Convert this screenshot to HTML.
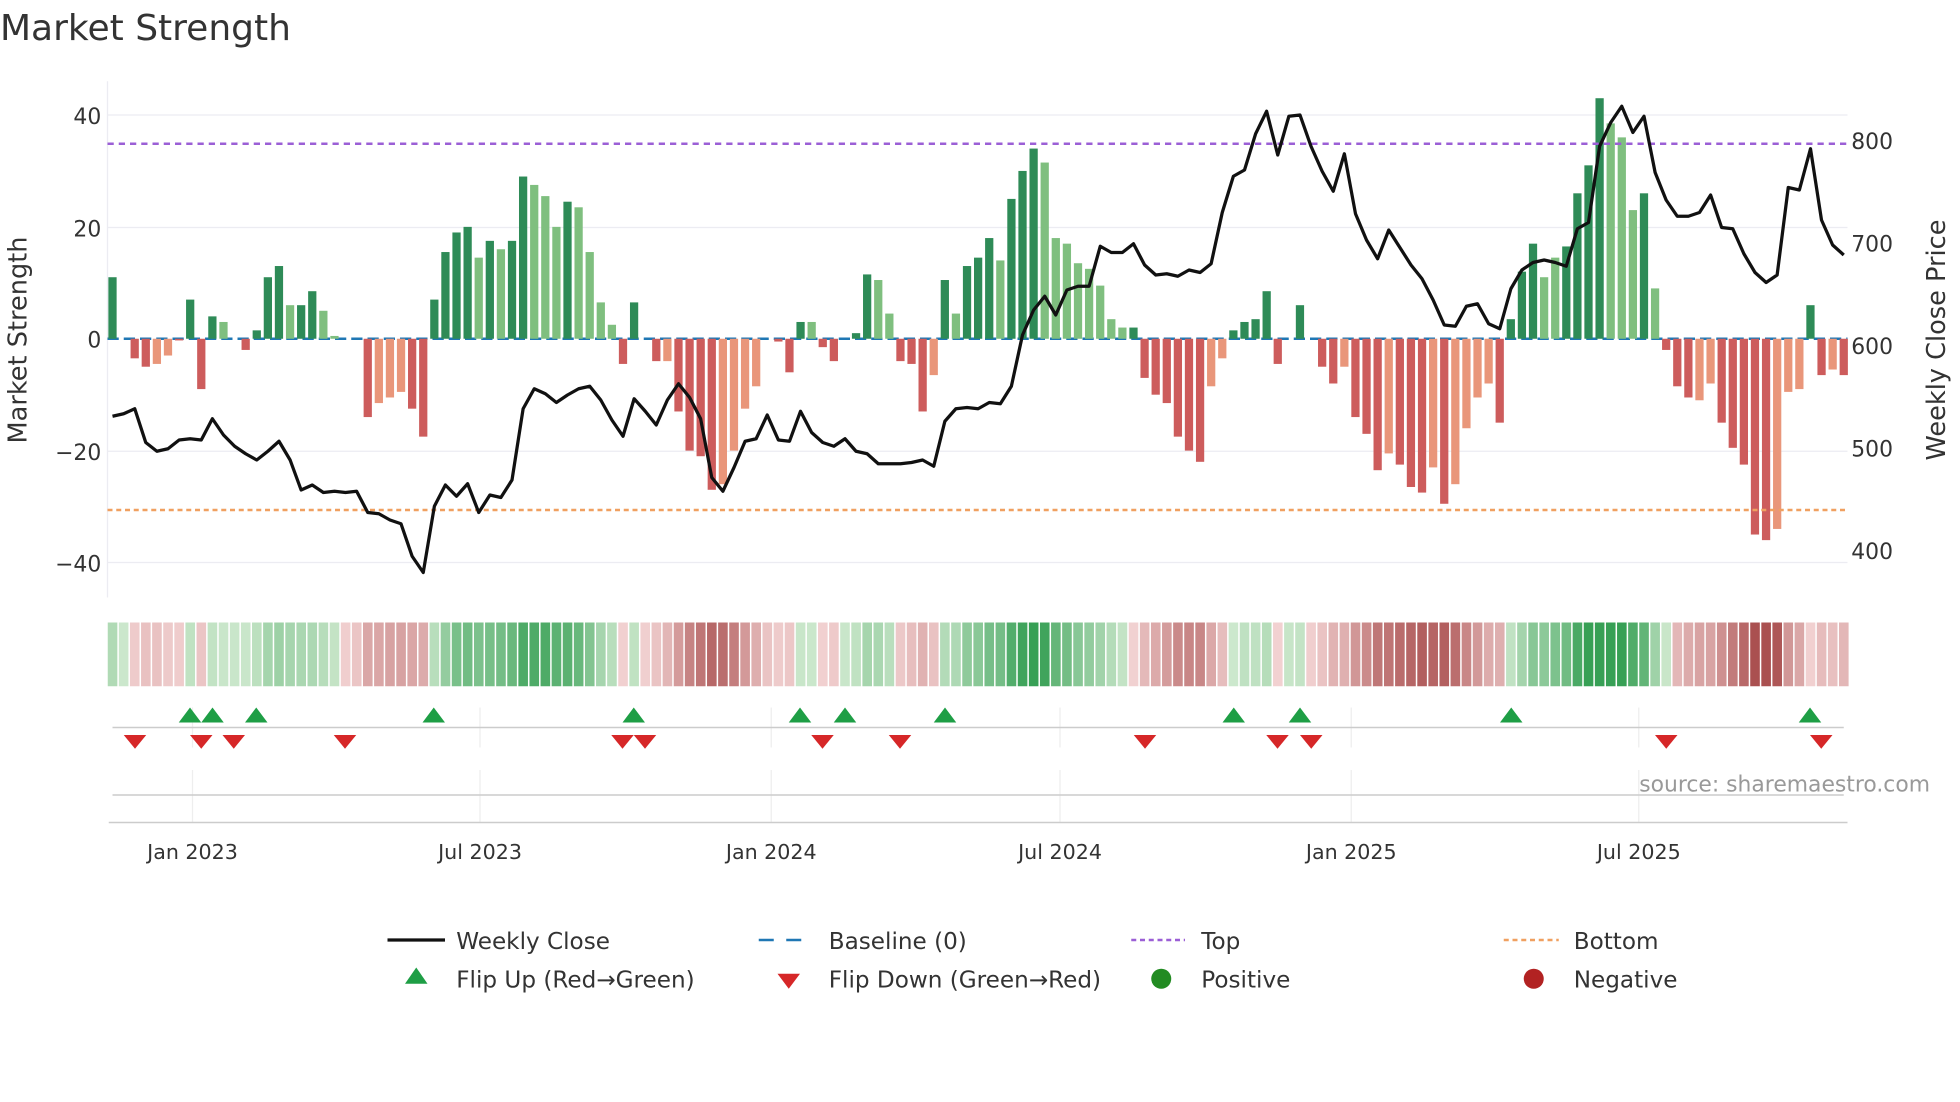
<!DOCTYPE html>
<html><head><meta charset="utf-8">
<style>
html,body{margin:0;padding:0;background:#fff;}
svg{display:block;font-family:"DejaVu Sans","Liberation Sans",sans-serif;}
</style></head>
<body>
<svg id="s" width="1960" height="1102" viewBox="0 0 1568 881.6" xmlns="http://www.w3.org/2000/svg">
<text x="0" y="32" font-size="28.8" fill="#333">Market Strength</text>
<g stroke="#ececf2" stroke-width="1">
<line x1="86" y1="92" x2="1478" y2="92"/><line x1="86" y1="182" x2="1478" y2="182"/>
<line x1="86" y1="361" x2="1478" y2="361"/><line x1="86" y1="450" x2="1478" y2="450"/>
<line x1="86" y1="65" x2="86" y2="478"/>
</g>
<line x1="86" y1="271" x2="1478" y2="271" stroke="#1f77b4" stroke-width="2" stroke-dasharray="9,4"/>
<g id="bars"></g>
<line x1="86" y1="115" x2="1478" y2="115" stroke="#9b5fd6" stroke-width="2" stroke-dasharray="5,4"/>
<line x1="86" y1="408" x2="1478" y2="408" stroke="#f0a060" stroke-width="2" stroke-dasharray="4,3"/>
<polyline id="price" fill="none" stroke="#111" stroke-width="2.6" stroke-linejoin="round"/>
<g font-size="17.5" fill="#333" text-anchor="end">
<text x="81" y="99">40</text><text x="81" y="189">20</text><text x="81" y="278">0</text>
<text x="81" y="368">−20</text><text x="81" y="457">−40</text>
</g>
<g font-size="17.5" fill="#333">
<text x="1481" y="119">800</text><text x="1481" y="201">700</text><text x="1481" y="283">600</text>
<text x="1481" y="365">500</text><text x="1481" y="447">400</text>
</g>
<text transform="translate(21,272) rotate(-90)" font-size="20.5" fill="#333" text-anchor="middle">Market Strength</text>
<text transform="translate(1556,272) rotate(-90)" font-size="20.5" fill="#333" text-anchor="middle">Weekly Close Price</text>
<g id="heat"></g>
<g stroke="#eee" stroke-width="1">
<line x1="154" y1="566" x2="154" y2="598"/><line x1="384" y1="566" x2="384" y2="598"/><line x1="617" y1="566" x2="617" y2="598"/>
<line x1="848" y1="566" x2="848" y2="598"/><line x1="1081" y1="566" x2="1081" y2="598"/><line x1="1311" y1="566" x2="1311" y2="598"/>
<line x1="154" y1="616" x2="154" y2="658"/><line x1="384" y1="616" x2="384" y2="658"/><line x1="617" y1="616" x2="617" y2="658"/>
<line x1="848" y1="616" x2="848" y2="658"/><line x1="1081" y1="616" x2="1081" y2="658"/><line x1="1311" y1="616" x2="1311" y2="658"/>
</g>
<line x1="90" y1="582" x2="1475" y2="582" stroke="#ccc" stroke-width="1.2"/>
<line x1="90" y1="636" x2="1475" y2="636" stroke="#ccc" stroke-width="1.2"/>
<line x1="87" y1="658" x2="1478" y2="658" stroke="#ccc" stroke-width="1.2"/>
<g id="flips"></g>
<text x="1544" y="633" font-size="17.5" fill="#999" text-anchor="end">source: sharemaestro.com</text>
<g font-size="16.5" fill="#333" text-anchor="middle">
<text x="154" y="687">Jan 2023</text><text x="384" y="687">Jul 2023</text><text x="617" y="687">Jan 2024</text>
<text x="848" y="687">Jul 2024</text><text x="1081" y="687">Jan 2025</text><text x="1311" y="687">Jul 2025</text>
</g>
<g font-size="18.5" fill="#333">
<line x1="310" y1="752" x2="356" y2="752" stroke="#111" stroke-width="2.6"/><text x="365" y="759">Weekly Close</text>
<line x1="607" y1="752" x2="651" y2="752" stroke="#1f77b4" stroke-width="2" stroke-dasharray="12,10"/><text x="663" y="759">Baseline (0)</text>
<line x1="905" y1="752" x2="948" y2="752" stroke="#9b5fd6" stroke-width="2" stroke-dasharray="4,3"/><text x="961" y="759">Top</text>
<line x1="1203" y1="752" x2="1247" y2="752" stroke="#f0a060" stroke-width="2" stroke-dasharray="4,3"/><text x="1259" y="759">Bottom</text>
<polygon points="333,774 342,787 324,787" fill="#1e9e45"/><text x="365" y="790">Flip Up (Red→Green)</text>
<polygon points="622,779 640,779 631,791" fill="#d62728"/><text x="663" y="790">Flip Down (Green→Red)</text>
<circle cx="929" cy="783" r="8" fill="#228b22"/><text x="961" y="790">Positive</text>
<circle cx="1227" cy="783" r="8" fill="#b22222"/><text x="1259" y="790">Negative</text>
</g>
</svg>
<script>
var B="11,0,-3.5,-5,-4.5L,-3L,-0.3,7,-9,4,3L,0,-2,1.5,11,13,6L,6,8.5,5L,0.5L,0,0,-14,-11.5L,-10.5L,-9.5L,-12.5,-17.5,7,15.5,19,20,14.5L,17.5,16L,17.5,29,27.5L,25.5L,20L,24.5,23.5L,15.5L,6.5L,2.5L,-4.5,6.5,0,-4,-4L,-13,-20,-21,-27,-26L,-20L,-12.5L,-8.5L,0,-0.5,-6,3,3L,-1.5,-4,0,1,11.5,10.5L,4.5L,-4,-4.5,-13,-6.5L,10.5,4.5L,13,14.5,18,14L,25,30,34,31.5L,18L,17L,13.5L,12.5L,9.5L,3.5L,2L,2,-7,-10,-11.5,-17.5,-20,-22,-8.5L,-3.5L,1.5,3,3.5,8.5,-4.5,0,6,0,-5,-8,-5L,-14,-17,-23.5,-20.5L,-22.5,-26.5,-27.5,-23L,-29.5,-26L,-16L,-10.5L,-8L,-15,3.5,12,17,11L,14.5L,16.5,26,31,43,38.5L,36L,23L,26,9L,-2,-8.5,-10.5,-11L,-8L,-15,-19.5,-22.5,-35,-36,-34L,-9.5L,-9L,6,-6.5,-5.5L,-6.5".split(",");
var P=[333,331,327,354,361,359,352,351,352,335,348,357,363,368,361,353,368,392,388,394,393,394,393,410,411,416,419,445,458,405,388,397,387,410,396,398,384,327,311,315,322,316,311,309,320,336,349,319,329,340,320,307,318,335,382,393,374,353,351,332,352,353,329,346,354,357,351,361,363,371,371,371,370,368,373,337,327,326,327,322,323,309,268,248,237,252,232,229,229,197,202,202,195,212,220,219,221,216,218,211,170,141,136,107,89,124,93,92,117,137,153,123,171,192,207,184,198,212,223,240,260,261,245,243,259,263,231,216,210,208,210,213,183,178,117,98,85,106,93,138,160,173,173,170,156,182,183,203,218,226,220,150,152,119,176,196,204];
var NS="http://www.w3.org/2000/svg";
function el(t,a,p){var e=document.createElementNS(NS,t);for(var k in a)e.setAttribute(k,a[k]);p.appendChild(e);return e;}
var step=(1475-90)/(B.length-1),gb=document.getElementById("bars"),gh=document.getElementById("heat");
var vals=[];
B.forEach(function(s,i){var L=s.indexOf("L")>=0,v=parseFloat(s);vals.push(v);var x=90+i*step;
 if(Math.abs(v)<0.2)return;var h=Math.abs(v)*4.475;var y=v>0?271-h:271;
 var c=v>0?(L?"#7fbf7f":"#2e8b57"):(L?"#e9967a":"#cd5c5c");
 el("rect",{x:x-3.3,y:y,width:6.6,height:h,fill:c},gb);});
var pts=P.map(function(y,i){return (90+i*step).toFixed(1)+","+y;}).join(" ");
document.getElementById("price").setAttribute("points",pts);
for(var i=0;i<vals.length;i++){var s=0,n=0;for(var j=i-2;j<=i+2;j++){if(j>=0&&j<vals.length){s+=vals[j];n++;}}
 var v=(s/n)*0.6+vals[i]*0.4;var t=Math.min(1,Math.abs(v)/30);var c;
 if(v>=0){c="rgb("+Math.round(205-150*t)+","+Math.round(232-72*t)+","+Math.round(205-120*t)+")";}
 else{c="rgb("+Math.round(242-72*t)+","+Math.round(210-130*t)+","+Math.round(210-130*t)+")";}
 el("rect",{x:90+i*step-4.4+0.6,y:498,width:step-1.2,height:51,fill:c},gh);}
var gf=document.getElementById("flips");
[152,170,205,347,507,640,676,756,987,1040,1209,1448].forEach(function(x){el("polygon",{points:x+",566 "+(x+9)+",578 "+(x-9)+",578",fill:"#1e9e45"},gf);});
[108,161,187,276,498,516,658,720,916,1022,1049,1333,1457].forEach(function(x){el("polygon",{points:(x-9)+",588 "+(x+9)+",588 "+x+",599",fill:"#d62728"},gf);});
</script>
</body></html>
